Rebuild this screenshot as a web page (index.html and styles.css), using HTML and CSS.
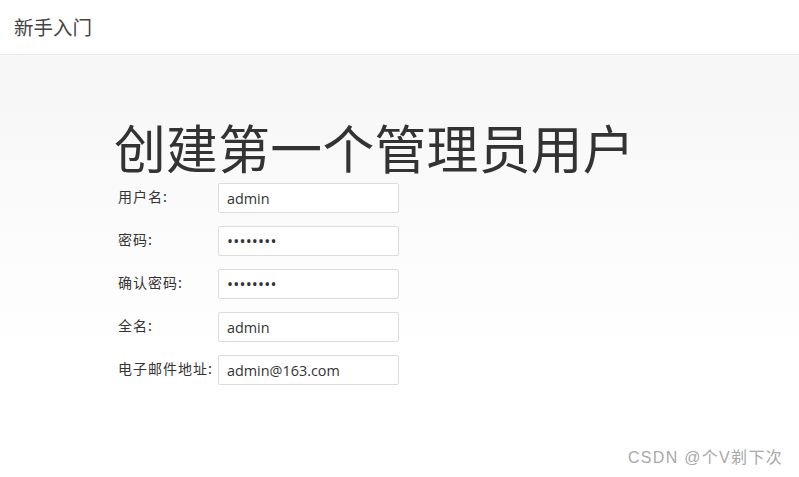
FILE: index.html
```html
<!DOCTYPE html>
<html lang="zh-CN">
<head>
<meta charset="utf-8">
<title>新手入门</title>
<link rel="stylesheet" href="styles.css">
</head>
<body>
<header class="topbar"><span class="topbar-title">新手入门</span></header>
<main class="content">
  <h1 class="page-title">创建第一个管理员用户</h1>
  <form class="form">
    <div class="row"><label class="label">用户名:</label><input class="field" type="text" value="admin"></div>
    <div class="row"><label class="label">密码:</label><input class="field field-password" type="password" value="12345678"></div>
    <div class="row"><label class="label">确认密码:</label><input class="field field-password" type="password" value="12345678"></div>
    <div class="row"><label class="label">全名:</label><input class="field" type="text" value="admin"></div>
    <div class="row"><label class="label">电子邮件地址:</label><input class="field" type="text" value="admin@163.com"></div>
  </form>
</main>
<div class="watermark">CSDN @个V剃下次</div>
</body>
</html>
```
FILE: styles.css
```css
html, body {
  margin: 0;
  height: 100%;
}
body {
  font-family: "Open Sans", "Noto Sans CJK SC", sans-serif;
  color: #333;
  background: linear-gradient(to bottom, #ffffff 0, #ffffff 55px, #f6f6f6 56px, #ffffff 360px);
  position: relative;
  overflow: hidden;
}
.topbar {
  height: 55px;
  border-bottom: 1px solid #e7e7e7;
  background: #fff;
  display: flex;
  align-items: center;
  padding-left: 14px;
  box-sizing: border-box;
}
.topbar-title {
  font-size: 19.5px;
  color: #444;
  font-family: "Noto Sans CJK SC", sans-serif;
  position: relative;
  top: -1px;
}
.content {
  padding-left: 114px;
}
.page-title {
  margin: 60px 0 0 0;
  font-size: 51.8px;
  font-weight: 400;
  line-height: 64px;
  color: #333;
  font-family: "Noto Sans CJK SC", sans-serif;
  letter-spacing: 0.3px;
}
.form {
  display: flex;
  flex-direction: column;
  gap: 13px;
  margin-top: 4px;
}
.row {
  display: flex;
  align-items: center;
  height: 30px;
}
.label {
  width: 104px;
  padding-left: 4px;
  box-sizing: border-box;
  font-size: 14px;
  letter-spacing: 1px;
  color: #333;
  font-family: "Noto Sans CJK SC", sans-serif;
  white-space: nowrap;
  position: relative;
  top: -2px;
}
.field {
  width: 181px;
  height: 30px;
  box-sizing: border-box;
  border: 1px solid #dcdcdc;
  border-radius: 2px;
  background: #fff;
  padding: 0 8px;
  font-family: "Open Sans", sans-serif;
  font-size: 14.4px;
  color: #333;
  outline: none;
}
.field-password {
  font-size: 16px;
  letter-spacing: 0.2px;
}
.watermark {
  position: absolute;
  right: 16px;
  bottom: 9px;
  font-family: "Liberation Sans", "Noto Sans CJK SC", sans-serif;
  font-size: 16px;
  letter-spacing: 1.3px;
  color: #a8a8a8;
}
```
